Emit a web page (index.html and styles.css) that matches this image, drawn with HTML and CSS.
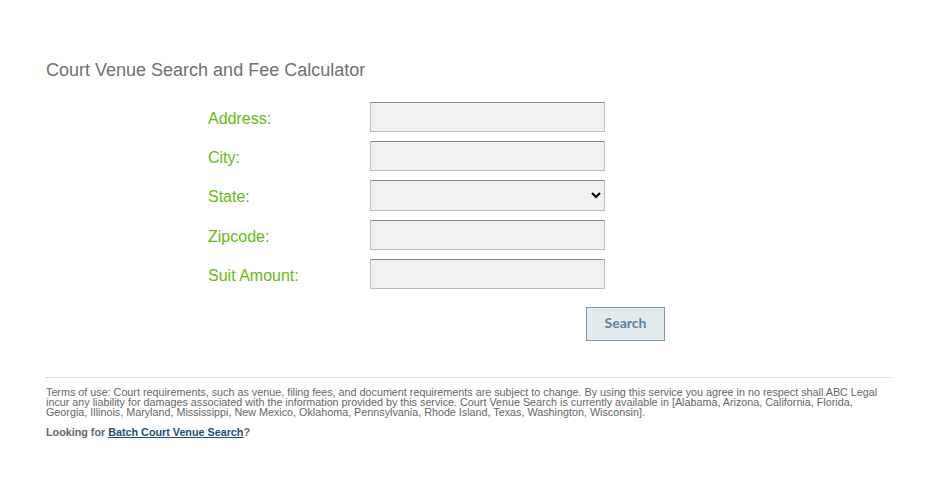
FILE: index.html
```html
<!DOCTYPE html>
<html lang="en">
<head>
  <meta charset="UTF-8">
  <title>Court Venue Search and Fee Calculator</title>
  <link rel="stylesheet" href="styles.css">
</head>
<body>
  <div class="page">
    <h1>Court Venue Search and Fee Calculator</h1>

    <form class="venue-form">
      <div class="row">
        <label for="address">Address:</label>
        <input type="text" id="address">
      </div>
      <div class="row">
        <label for="city">City:</label>
        <input type="text" id="city">
      </div>
      <div class="row row-select">
        <label for="state">State:</label>
        <select id="state">
          <option value=""></option>
        </select>
      </div>
      <div class="row">
        <label for="zipcode">Zipcode:</label>
        <input type="text" id="zipcode">
      </div>
      <div class="row">
        <label for="amount">Suit Amount:</label>
        <input type="text" id="amount">
      </div>
      <div class="actions">
        <button type="button">Search</button>
      </div>
    </form>

    <div class="terms">
      <p>Terms of use: Court requirements, such as venue, filing fees, and document requirements are subject to change. By using this service you agree in no respect shall ABC Legal incur any liability for damages associated with the information provided by this service. Court Venue Search is currently available in [Alabama, Arizona, California, Florida, Georgia, Illinois, Maryland, Mississippi, New Mexico, Oklahoma, Pennsylvania, Rhode Island, Texas, Washington, Wisconsin].</p>
      <p class="batch">Looking for <a href="#">Batch Court Venue Search</a>?</p>
    </div>
  </div>
</body>
</html>
```

FILE: styles.css
```css
body {
  margin: 0;
  background-color: #fff;
  color: #666;
  font-family: "Liberation Sans", Arial, sans-serif;
}
.page {
  width: 846px;
  padding: 60px 0 0 46px;
}
h1 {
  margin: 0 0 22px;
  font-size: 18px;
  line-height: 20px;
  font-weight: normal;
  color: #707070;
}
.venue-form {
  padding-left: 162px;
}
.row {
  display: flex;
  align-items: center;
  height: 30px;
  margin-bottom: 9px;
}
.row-select {
  height: 31px;
}
.row label {
  width: 162px;
  padding-top: 4px;
  font-size: 16px;
  color: #66bb11;
}
.row-select label {
  padding-top: 2px;
}
.row input, .row select {
  box-sizing: border-box;
  width: 235px;
  height: 100%;
  background-color: #f1f1f1;
  border: 1px solid;
  border-color: #85898c #bdbdbd #bdbdbd #bdbdbd;
  border-radius: 0;
  margin: 0;
  padding: 0 4px;
}
.actions {
  width: 457px;
  margin-top: 18px;
  display: flex;
  justify-content: flex-end;
}
.actions button {
  width: 79px;
  height: 34px;
  padding: 0 0 4px;
  background-color: #e3ebee;
  border: 1px solid #7d97a8;
  color: #55849f;
  font-family: Lato, sans-serif;
  font-size: 14px;
  font-weight: bold;
}
.terms {
  margin-top: 36px;
  border-top: 1px dotted #ccc;
  padding-top: 9px;
  font-size: 10.77px;
  line-height: 10px;
  color: #666;
}
.terms p {
  margin: 0;
}
.terms .batch {
  margin-top: 9px;
  line-height: 12px;
  font-weight: bold;
}
.terms a {
  color: #1f4e79;
}
```
